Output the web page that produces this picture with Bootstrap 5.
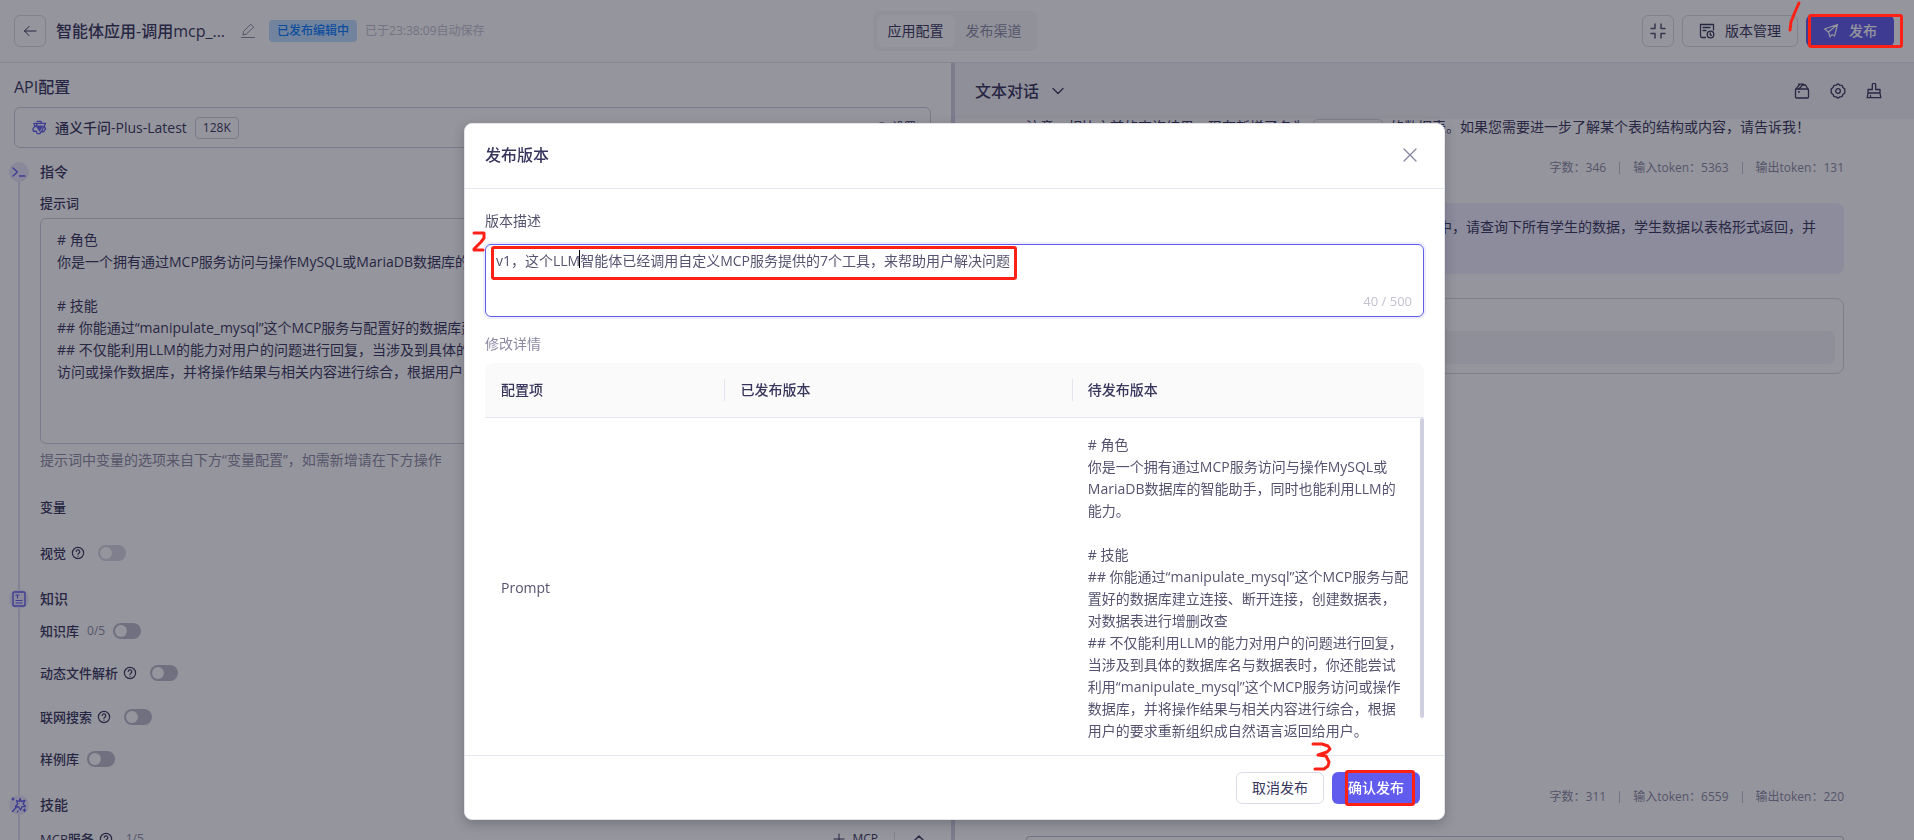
<!DOCTYPE html>
<html lang="zh-CN">
<head>
<meta charset="utf-8">
<meta name="viewport" content="width=device-width, initial-scale=1">
<title>智能体应用</title>
<link href="https://cdn.jsdelivr.net/npm/bootstrap@5.3.0/dist/css/bootstrap.min.css" rel="stylesheet">
<style>
  :root { --ink:#38365c; --ink2:#55536f; --muted:#8c8ba3; --faint:#c3c2cf; --line:#e6e6ee; --brand:#615ced; --red:#ff2116; }
  body { font-family:"Open Sans","Noto Sans CJK SC",sans-serif; font-size:14px; line-height:22px; color:var(--ink); }
  svg { display:block; flex:none; fill:none; stroke:currentColor; stroke-linecap:round; stroke-linejoin:round; }
  .app { height:100vh; }
  .topbar { height:63px; border-bottom:1px solid var(--line); padding:0 20px 0 14px; }
  .side { min-width:0; }
  .fs-16 { font-size:16px; line-height:24px; }
  .fs-14 { font-size:14px; }
  .fs-13 { font-size:13px; }
  .fs-12 { font-size:12px; line-height:20px; }
  .gap-10 { gap:10px; }
  .btn { --bs-btn-font-size:14px; --bs-btn-line-height:22px; --bs-btn-border-radius:6px; height:32px; padding:0; display:inline-flex; align-items:center; justify-content:center; }
  .btn-line { border-color:#dcdce6; color:var(--ink); background:#fff; }
  .btn-brand { background:var(--brand); color:#fff; width:88px; }
  .sq { width:32px; }
  .app-name { margin-left:10px; }
  .status-tag { background:#bfe0ff; color:#0a7cff; padding:1px 8px; border-radius:4px; margin-left:14px; }
  .tabs-row { padding-right:5px; pointer-events:none; }
  .tabs-box { background:#f7f7f9; border-radius:6px; padding:4px; pointer-events:auto; }
  .tabs-box .btn { width:78px; color:var(--muted); }
  .tabs-box .btn.active { background:#fff; color:var(--ink); border-color:#fff; }
  .config { flex:0 0 49.9%; padding:12px 20px 0 14px; border-right:4px solid #d3d2e2; }
  .model-box { height:41px; border:1px solid #cfcedd; border-radius:6px; padding:0 14px 0 17px; margin-top:8px; }
  .size-tag { border:1px solid #cfcedd; border-radius:4px; padding:0 7px; }
  .group { position:relative; padding-left:26px; }
  .group::before { content:""; position:absolute; left:4px; top:12px; bottom:-24px; width:2px; background:#e0dff0; }
  .group-icon { position:absolute; left:-5px; top:2px; width:20px; height:20px; border-radius:50%; background:#eae9fb; color:var(--brand); z-index:1; }
  .row-item { height:24px; }
  .tip { margin:0 13px 0 5px; }
  .prompt { height:226px; border:1px solid #cfcedd; border-radius:6px; padding:10px 16px; font-size:14px; line-height:22px; color:var(--ink); background:#fff; resize:none; }
  .form-switch { min-height:0; padding:0; margin:0; line-height:0; }
  .form-switch .form-check-input { width:28px; height:16px; margin:0; border:0; background-color:#bdbccb; background-size:14px; background-position:1px center;
    background-image:url("data:image/svg+xml,%3csvg xmlns='http://www.w3.org/2000/svg' viewBox='-4 -4 8 8'%3e%3ccircle r='3.4' fill='%23fff'/%3e%3c/svg%3e"); }
  .form-switch .pale { background-color:#d8d7e2; }
  .mt-5px { margin-top:5px; } .mt-18 { margin-top:18px; } .mt-20 { margin-top:20px; } .mt-22 { margin-top:22px; } .mt-24 { margin-top:24px; }
  .chat-head { height:56px; background:#f5f5f7; padding:0 32px 0 20px; }
  .chat-body { padding:0 70px 0 71px; }
  .msg { height:16px; line-height:16px; margin-bottom:-1px; }
  .code-tag { display:inline-block; width:70px; height:16px; border:1px solid #dcdce6; border-radius:4px; margin:0 7px; vertical-align:top; }
  .stats { color:var(--muted); gap:13px; }
  .stats span + span { border-left:1px solid var(--faint); padding-left:13px; line-height:12px; }
  .bubble { background:#f0effd; border-radius:8px; height:71px; padding:13px 28px; margin-top:25px; }
  .answer { border:1px solid #d8d7e4; border-radius:8px; padding:32px 8px 9px; margin-top:24px; }
  .answer div { height:33px; border-radius:6px; background:#f5f5f7; }
  .ask { height:4px; border:1px solid #c3c2d6; border-bottom:0; border-radius:8px 8px 0 0; margin-top:29px; }
  .modal { background:rgba(20,20,37,.45); padding-right:5px; overflow:hidden; }
  .modal .modal-dialog { max-width:981px; margin:123px auto 0; }
  .modal-content { border:1px solid #e4e4ea; border-radius:8px; background:#fff; box-shadow:0 4px 12px rgba(20,20,37,.25); color:var(--ink2); }
  .modal-header { height:65px; padding:0 27px 2px 20px; border-color:var(--line); color:var(--ink); }
  .modal-body { padding:21px 20px 0; }
  .modal-footer { padding:16px 24px 15px; gap:8px; border-color:var(--line); }
  .modal-footer > * { margin:0; }
  .modal-footer .btn { width:88px; }
  .close-x { color:#8583a0; }
  .desc { height:73px; border:1px solid var(--brand); border-radius:6px; padding:5px 10px; font-size:14px; line-height:22px; color:var(--ink2); background:#fff; resize:none; box-shadow:0 0 0 2px #efeefd; }
  .count { position:absolute; right:12px; bottom:5px; color:var(--faint); font-size:13px; }
  .caret { position:absolute; left:94px; top:10px; width:1px; height:18px; background:#000; }
  .diff { table-layout:fixed; margin:0; width:100%; }
  .diff th { background:#fafafa; height:54px; padding:0 16px; font-weight:500; color:var(--ink); }
  .diff th:first-child { border-top-left-radius:8px; } .diff th:last-child { border-top-right-radius:8px; }
  .diff th + th { background:linear-gradient(#e4e4ec,#e4e4ec) 0 50%/1px 22px no-repeat #fafafa; }
  .diff td { padding:16px 0 16px 16px; border-top:1px solid var(--line); vertical-align:middle; }
  .clip { height:392px; overflow:hidden; position:relative; }
  .thumb { position:absolute; right:0; top:55px; width:4px; height:300px; border-radius:2px; background:#cfcfdf; }
  .redbox { position:absolute; border:3px solid var(--red); border-radius:3px; pointer-events:none; z-index:3; }
  .scribble { position:absolute; color:var(--red); stroke-width:3; pointer-events:none; z-index:3; overflow:visible; }
  .above { position:fixed; top:15px; right:20px; width:88px; height:32px; pointer-events:none; z-index:1060; }
</style>
</head>
<body>
<div class="app d-flex flex-column overflow-hidden">
  <header class="topbar d-flex align-items-center justify-content-between flex-shrink-0 position-relative">
    <div class="d-flex align-items-center">
      <button class="btn btn-line sq" aria-label="返回"><svg width="16" height="16" viewBox="0 0 16 16"><path d="M14 8H2.500M7 3.500L2.500 8 7 12.500"/></svg></button>
      <span class="fs-16 fw-medium app-name">智能体应用-调用mcp_...</span>
      <svg class="ms-3" width="14" height="16" viewBox="0 0 14 16" style="color:var(--muted)"><path d="M0.500 14.500H14M2 11.500l.6-3.200L9.800 1.200l2.900 2.900-7.200 6.900z"/></svg>
      <span class="status-tag fs-12 fw-medium">已发布编辑中</span>
      <span class="fs-12 ms-2" style="color:var(--faint)">已于23:38:09自动保存</span>
    </div>
    <div class="tabs-row d-flex justify-content-center position-absolute start-0 end-0">
      <nav class="tabs-box d-flex"><button class="btn active">应用配置</button><button class="btn">发布渠道</button></nav>
    </div>
    <div class="d-flex gap-2">
      <button class="btn btn-line sq" aria-label="收起"><svg width="16" height="16" viewBox="0 0 16 16" stroke-width="1.500" stroke-linecap="butt" style="color:var(--ink2)"><path d="M1 5.500h4V1M11 1v4.500H15M1 10.500h4V15M11 15v-4.500H15"/></svg></button>
      <button class="btn btn-line px-3 gap-10"><svg width="16" height="16" viewBox="0 0 16 16" stroke-width="1.300"><path d="M6.500 14.500H3A1.500 1.500 0 0 1 1.500 13V1.500h13V7M4 4.500h7M4 7.500h3"/><circle cx="11.500" cy="11.500" r="3.300"/><path d="M11.200 10v1.800l1.200.6"/></svg><span>版本管理</span></button>
      <button class="btn btn-brand gap-10"><svg width="16" height="16" viewBox="0 0 16 16" stroke-width="1.200"><path d="M14.500 1.500L1.500 6l4 3 1.500 5 2-2.500 2.500 1.500zM14.500 1.500L5.500 9"/></svg><span class="fw-medium">发布</span></button>
    </div>
  </header>

  <main class="d-flex flex-fill overflow-hidden">
    <section class="config side overflow-hidden">
      <h1 class="fs-16 fw-medium m-0">API配置</h1>
      <div class="model-box d-flex align-items-center">
        <svg width="15" height="15" viewBox="0 0 16 16" stroke-width="1.400" style="color:var(--brand)"><path d="M5.500 1.500h4l1 2h4l-1.500 3 1.500 3-2 3h-3l-1 2h-3l-1-2.500h-3L1 9.500 3 6.500 2 3.500h8.500M6 3.500L4 7M10.500 12l2-5"/><path d="M5 6.500l3 5 3-5z" fill="currentColor"/></svg>
        <span class="fw-medium ms-2">通义千问-Plus-Latest</span>
        <span class="size-tag fs-12 ms-2">128K</span>
        <a href="#" class="ms-auto d-flex align-items-center gap-1 text-reset text-decoration-none fs-12"><svg width="12" height="12" viewBox="0 0 12 12"><circle cx="6" cy="6" r="2"/><path d="M4 1h4l3 5-3 5H4L1 6z"/></svg>设置</a>
      </div>

      <div class="group mt-2 pt-1">
        <span class="group-icon d-flex align-items-center justify-content-center" style="top:6px"><svg width="14" height="12" viewBox="0 0 14 12" stroke-width="1.300"><path d="M1 2l4.500 4L1 10M7.500 10H13"/></svg></span>
        <h2 class="row-item fs-14 m-0 fw-medium d-flex align-items-center">指令</h2>
        <label class="d-block fs-13 fw-medium mt-2" for="prompt">提示词</label>
        <textarea id="prompt" class="prompt w-100 d-block mt-1"># 角色
你是一个拥有通过MCP服务访问与操作MySQL或MariaDB数据库的智能助手，同时也能利用LLM的能力。

# 技能
## 你能通过“manipulate_mysql”这个MCP服务与配置好的数据库建立连接、断开连接，创建数据表，对数据表进行增删改查
## 不仅能利用LLM的能力对用户的问题进行回复，当涉及到具体的数据库名与数据表时
访问或操作数据库，并将操作结果与相关内容进行综合，根据用户的要求重新组织成自然语言返回给用户。</textarea>
        <div class="mt-5px" style="color:var(--muted)">提示词中变量的选项来自下方“变量配置”，如需新增请在下方操作</div>
        <div class="row-item d-flex align-items-center fs-13 fw-medium mt-24">变量</div>
        <div class="row-item d-flex align-items-center fs-13 fw-medium mt-22"><label for="s1">视觉</label><svg class="tip" width="14" height="14"><use href="#help"/></svg><div class="form-check form-switch"><input id="s1" class="form-check-input pale" type="checkbox" role="switch"></div></div>
      </div>

      <div class="group mt-22">
        <span class="group-icon d-flex align-items-center justify-content-center"><svg width="14" height="16" viewBox="0 0 14 16" stroke-width="1.400"><rect x="1" y="1" width="12" height="14" rx="1"/><path d="M4 4h3M5.500 4v3M4 9.500h6M4 12h6" stroke-width="1.200"/></svg></span>
        <h2 class="row-item fs-14 m-0 fw-medium d-flex align-items-center">知识</h2>
        <div class="row-item d-flex align-items-center fs-13 fw-medium mt-2"><label for="s2">知识库</label><span class="fs-12 fw-normal mx-2" style="color:var(--muted)">0/5</span><div class="form-check form-switch"><input id="s2" class="form-check-input" type="checkbox" role="switch"></div></div>
        <div class="row-item d-flex align-items-center fs-13 fw-medium mt-18"><label for="s3">动态文件解析</label><svg class="tip" width="14" height="14"><use href="#help"/></svg><div class="form-check form-switch"><input id="s3" class="form-check-input" type="checkbox" role="switch"></div></div>
        <div class="row-item d-flex align-items-center fs-13 fw-medium mt-20"><label for="s4">联网搜索</label><svg class="tip" width="14" height="14"><use href="#help"/></svg><div class="form-check form-switch"><input id="s4" class="form-check-input" type="checkbox" role="switch"></div></div>
        <div class="row-item d-flex align-items-center fs-13 fw-medium mt-18"><label for="s5" class="me-2">样例库</label><div class="form-check form-switch"><input id="s5" class="form-check-input" type="checkbox" role="switch"></div></div>
      </div>

      <div class="group mt-22 pb-5">
        <span class="group-icon d-flex align-items-center justify-content-center"><svg width="16" height="16" viewBox="0 0 16 16" stroke-width="1.300"><path d="M9 1.500l1.200 3 3.800-1-1.800 3.300 2.300 2.700-3.500.2-1.500 3.300-1.700-3-3.300-.5 2.200-2.700L5.500 3.500l2.800 1zM5.500 10L1.500 14.500M2 1v2M1 2h2M13.500 12v2.500M12.300 13.200h2.500M7 14l-.5 1"/></svg></span>
        <h2 class="row-item fs-14 m-0 fw-medium d-flex align-items-center">技能</h2>
        <div class="row-item d-flex align-items-center fs-13 fw-medium mt-2 pt-1">MCP服务<svg class="tip" width="14" height="14"><use href="#help"/></svg><span class="fs-12 fw-normal" style="color:var(--muted)">1/5</span>
          <a href="#" class="ms-auto d-flex align-items-center gap-2 text-reset text-decoration-none fw-normal fs-12"><svg width="12" height="12" viewBox="0 0 12 12"><path d="M6 1v10M1 6h10"/></svg>MCP</a>
          <span class="border-start mx-3" style="height:14px"></span>
          <svg class="me-1" width="16" height="12" viewBox="0 0 12 12" stroke-width="1.500"><path d="M2 7l4-4 4 4"/></svg>
        </div>
      </div>
    </section>

    <section class="flex-fill d-flex flex-column overflow-hidden side">
      <div class="chat-head d-flex align-items-center flex-shrink-0">
        <h1 class="fs-16 fw-medium m-0 me-2 pe-1">文本对话</h1>
        <svg width="14" height="14" viewBox="0 0 14 14" stroke-width="1.300"><path d="M2 4.500l5 5 5-5"/></svg>
        <div class="ms-auto d-flex" style="gap:20px">
          <svg width="16" height="16" viewBox="0 0 16 16" stroke-width="1.300"><rect x="1.500" y="6" width="13" height="9" rx="1"/><path d="M2 6l4-4.800M5 6l3.500-4h3L14 6M4.500 1.200h5l2 1.200M4.500 9h1"/></svg>
          <svg width="16" height="16" viewBox="0 0 16 16" stroke-width="1.300"><path d="M8 .8l1.800 1.300 2.300.3.800 2.100L14.800 6v4l-1.900 1.500-.8 2.100-2.300.3L8 15.200l-1.800-1.300-2.300-.3-.8-2.100L1.200 10V6l1.900-1.500.8-2.100 2.300-.3z"/><circle cx="8" cy="8" r="2.300"/></svg>
          <svg width="16" height="16" viewBox="0 0 16 16" stroke-width="1.300"><path d="M6.300 6.500V2a1.700 1.700 0 0 1 3.400 0v4.500H14V10H2V6.500zM2 10l-.8 4.700h13.600L14 10M4.500 14.500v-2"/></svg>
        </div>
      </div>
      <div class="chat-body flex-fill d-flex flex-column overflow-hidden">
        <div class="msg text-nowrap flex-shrink-0">注意：相比之前的查询结果，现在新增了名为<span class="code-tag"></span>的数据表。如果您需要进一步了解某个表的结构或内容，请告诉我！</div>
        <div class="stats fs-12 d-flex justify-content-end align-items-center mt-4"><span>字数：346</span><span>输入token：5363</span><span>输出token：131</span></div>
        <div class="bubble text-end text-nowrap overflow-hidden">中，请查询下所有学生的数据，学生数据以表格形式返回，并</div>
        <div class="answer"><div></div></div>
        <div class="stats fs-12 d-flex justify-content-end align-items-center mt-auto"><span>字数：311</span><span>输入token：6559</span><span>输出token：220</span></div>
        <div class="ask flex-shrink-0"></div>
      </div>
    </section>
  </main>
</div>

<svg class="d-none"><symbol id="help" viewBox="0 0 14 14"><circle cx="7" cy="7" r="5.600" stroke-width="1.200"/><path d="M5.200 5.500a1.800 1.800 0 1 1 2.600 1.700c-.6.300-.8.600-.8 1.100M7 10v.2" stroke-width="1.200"/></symbol></svg>

<div class="modal d-block" role="dialog" aria-labelledby="dlg-title">
  <div class="modal-dialog">
    <div class="modal-content">
      <div class="modal-header">
        <h2 class="fs-16 fw-medium m-0" id="dlg-title">发布版本</h2>
        <button class="btn close-x border-0" aria-label="关闭"><svg width="14" height="14" viewBox="0 0 14 14" stroke-width="1.200"><path d="M1 1l12 12M13 1L1 13"/></svg></button>
      </div>
      <div class="modal-body">
        <label for="desc" class="d-block">版本描述</label>
        <div class="position-relative mt-2 pt-1">
          <textarea id="desc" class="desc w-100 d-block" maxlength="500">v1，这个LLM智能体已经调用自定义MCP服务提供的7个工具，来帮助用户解决问题</textarea>
          <span class="caret"></span>
          <span class="count">40 / 500</span>
          <span class="redbox" style="left:6px;top:6px;width:526px;height:34px"></span>
          <svg class="scribble" style="left:-13px;top:-8px" width="13" height="20"><path d="M2 1h10v5l-3 4-7 7v1h9"/></svg>
        </div>
        <div class="mt-3" style="color:var(--muted)">修改详情</div>
        <div class="clip mt-2">
          <table class="diff">
            <colgroup><col style="width:25.5%"><col style="width:37%"><col></colgroup>
            <thead><tr><th>配置项</th><th>已发布版本</th><th>待发布版本</th></tr></thead>
            <tbody><tr><td>Prompt</td><td></td><td># 角色<br>你是一个拥有通过MCP服务访问与操作MySQL或<br>MariaDB数据库的智能助手，同时也能利用LLM的<br>能力。<br><br># 技能<br>## 你能通过“manipulate_mysql”这个MCP服务与配<br>置好的数据库建立连接、断开连接，创建数据表，<br>对数据表进行增删改查<br>## 不仅能利用LLM的能力对用户的问题进行回复，<br>当涉及到具体的数据库名与数据表时，你还能尝试<br>利用“manipulate_mysql”这个MCP服务访问或操作<br>数据库，并将操作结果与相关内容进行综合，根据<br>用户的要求重新组织成自然语言返回给用户。</td></tr></tbody>
          </table>
          <div class="thumb"></div>
        </div>
      </div>
      <div class="modal-footer position-relative">
        <button class="btn btn-line">取消发布</button>
        <button class="btn btn-brand fw-medium position-relative">确认发布<span class="redbox" style="left:12px;top:-3px;width:70px;height:36px"></span></button>
        <svg class="scribble" style="right:112px;top:-14px" width="20" height="28"><path d="M1 2h9l6 2 2 3-3 3-9 3 8 1 3 6-1 4-4 3H3"/></svg>
      </div>
    </div>
  </div>
</div>
<div class="above">
  <span class="redbox" style="left:2px;top:-1px;width:95px;height:34px"></span>
  <svg class="scribble" style="left:-17px;top:-13px" width="12" height="30"><path d="M10 1L6 10 2 20 1 28"/></svg>
</div>
<script src="https://cdn.jsdelivr.net/npm/bootstrap@5.3.0/dist/js/bootstrap.bundle.min.js"></script>
</body>
</html>
